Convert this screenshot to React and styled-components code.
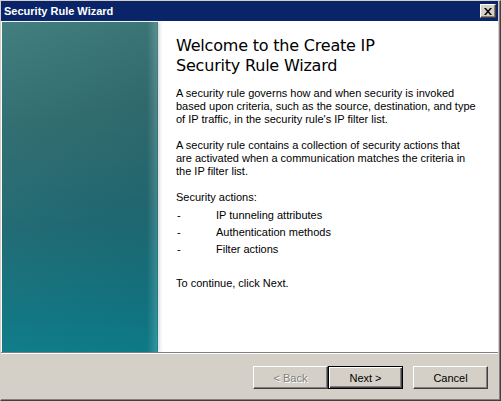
import React from 'react';
import styled, { createGlobalStyle } from 'styled-components';

const GlobalStyle = createGlobalStyle`
  html, body {
    margin: 0;
    padding: 0;
    background: #d4d0c8;
  }
  * {
    box-sizing: border-box;
  }
`;

const Window = styled.div`
  width: 501px;
  height: 401px;
  display: flex;
  flex-direction: column;
  background: #d4d0c8;
  border-top: 1px solid #d4d0c8;
  border-left: 1px solid #d4d0c8;
  border-right: 1px solid #404040;
  border-bottom: 1px solid #404040;
  box-shadow: inset -1px -1px 0 #808080;
  font-family: 'Liberation Sans', Arial, sans-serif;
  overflow: hidden;
`;

const TitleBar = styled.div`
  height: 20px;
  margin-right: 2px;
  display: flex;
  align-items: center;
  justify-content: space-between;
  padding: 0 2px 0 3px;
  background: #0a246a;
  color: #fff;
  font-weight: bold;
  font-size: 11px;
`;

const CloseButton = styled.div`
  width: 16px;
  height: 14px;
  display: flex;
  align-items: center;
  justify-content: center;
  background: #d4d0c8;
  border-top: 1px solid #fff;
  border-left: 1px solid #fff;
  border-right: 1px solid #404040;
  border-bottom: 1px solid #404040;
  box-shadow: inset -1px -1px 0 #808080;
`;

const Body = styled.div`
  height: 332px;
  margin-right: 2px;
  display: flex;
  background: #fff;
  padding: 1px 0 0 1px;
  border-bottom: 1px solid #808080;
`;

const Sidebar = styled.div`
  width: 156px;
  flex: none;
  background:
    linear-gradient(90deg, rgba(255, 255, 255, 0) 0%, rgba(0, 30, 40, 0.08) 93%, rgba(190, 215, 215, 0.2) 99%, rgba(0, 0, 0, 0) 100%),
    linear-gradient(172deg, #437f7f 0%, #336f72 30%, #226c75 60%, #137884 85%, #0e828e 100%);
  box-shadow: 2px 0 3px rgba(110, 120, 125, 0.25);
`;

const Content = styled.div`
  flex: 1;
  padding: 14px 12px 0 18px;
  color: #000;
  font-size: 11px;
  line-height: 13px;
`;

const Heading = styled.h1`
  margin: 0 0 11px;
  font-family: 'DejaVu Sans', Verdana, sans-serif;
  font-weight: normal;
  font-size: 16px;
  line-height: 20px;
  letter-spacing: -0.2px;
`;

const Para = styled.p`
  margin: 0 0 13px;
`;

const ActionList = styled.ul`
  list-style: none;
  margin: 3px 0 19px;
  padding: 0;
`;

const ActionItem = styled.li`
  display: flex;
  height: 17px;
  align-items: center;

  &::before {
    content: '-';
    width: 39px;
    padding-left: 1px;
  }
`;

const Footer = styled.div`
  flex: 1;
  display: flex;
  justify-content: flex-end;
  align-items: flex-start;
  padding: 12px 10px 0 0;
  border-top: 1px solid #fff;
  margin-right: 2px;
`;

const Button = styled.button`
  width: 75px;
  height: 23px;
  margin-left: ${(p) => (p.$gap ? '10px' : '0')};
  padding: 0;
  font-family: 'Liberation Sans', Arial, sans-serif;
  font-size: 11px;
  color: ${(p) => (p.disabled ? '#808080' : '#000')};
  text-shadow: ${(p) => (p.disabled ? '1px 1px 0 #fff' : 'none')};
  background: #d4d0c8;
  border-style: solid;
  border-width: 1px;
  border-color: ${(p) => (p.$default ? '#000' : '#fff #404040 #404040 #fff')};
  box-shadow: ${(p) =>
    p.$default
      ? 'inset 1px 1px 0 #fff, inset -1px -1px 0 #404040, inset -2px -2px 0 #808080'
      : 'inset -1px -1px 0 #808080'};
  cursor: default;
`;

const actions = ['IP tunneling attributes', 'Authentication methods', 'Filter actions'];

export default function App() {
  return (
    <>
      <GlobalStyle />
      <Window>
        <TitleBar>
          <span>Security Rule Wizard</span>
          <CloseButton>
            <svg width="8" height="7" viewBox="0 0 8 7">
              <path d="M0 0h2l2 2.5L6 0h2L5 3.5 8 7H6L4 4.5 2 7H0l3-3.5z" fill="#000" />
            </svg>
          </CloseButton>
        </TitleBar>
        <Body>
          <Sidebar />
          <Content>
            <Heading>
              Welcome to the Create IP
              <br />
              Security Rule Wizard
            </Heading>
            <Para>
              A security rule governs how and when security is invoked
              <br />
              based upon criteria, such as the source, destination, and type
              <br />
              of IP traffic, in the security rule's IP filter list.
            </Para>
            <Para>
              A security rule contains a collection of security actions that
              <br />
              are activated when a communication matches the criteria in
              <br />
              the IP filter list.
            </Para>
            <div>Security actions:</div>
            <ActionList>
              {actions.map((a) => (
                <ActionItem key={a}>{a}</ActionItem>
              ))}
            </ActionList>
            <div>To continue, click Next.</div>
          </Content>
        </Body>
        <Footer>
          <Button disabled>&lt; Back</Button>
          <Button $default>Next &gt;</Button>
          <Button $gap>Cancel</Button>
        </Footer>
      </Window>
    </>
  );
}
